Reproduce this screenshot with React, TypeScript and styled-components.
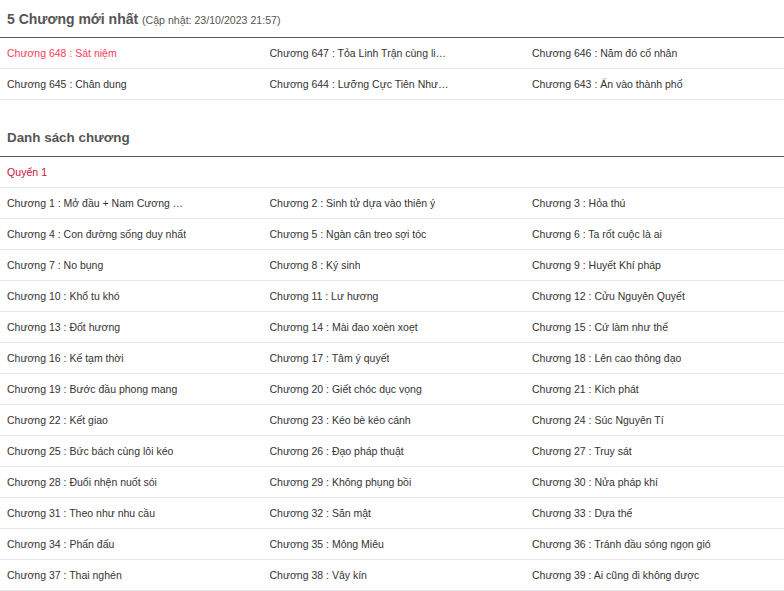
import styled, { createGlobalStyle } from 'styled-components';

const GlobalStyle = createGlobalStyle`
  html, body {
    margin: 0;
    padding: 0;
    background: #fff;
    overflow: hidden;
  }
  body {
    font-family: 'Liberation Sans', Arial, sans-serif;
    color: #333;
  }
`;

const latest = [
  {n: 648, t: 'Sát niệm', hot: true},
  {n: 647, t: 'Tỏa Linh Trận cùng linh canh'},
  {n: 646, t: 'Năm đó cố nhân'},
  {n: 645, t: 'Chân dung'},
  {n: 644, t: 'Lưỡng Cực Tiên Như Ý Đỉnh'},
  {n: 643, t: 'Ẩn vào thành phố'},
];

const chapters = [
  'Mở đầu + Nam Cương Thập Vạn Đại Sơn',
  'Sinh tử dựa vào thiên ý',
  'Hỏa thú',
  'Con đường sống duy nhất',
  'Ngàn cân treo sợi tóc',
  'Ta rốt cuộc là ai',
  'No bụng',
  'Ký sinh',
  'Huyết Khí pháp',
  'Khổ tu khó',
  'Lư hương',
  'Cửu Nguyên Quyết',
  'Đốt hương',
  'Mài đao xoèn xoẹt',
  'Cứ làm như thế',
  'Kế tạm thời',
  'Tâm ý quyết',
  'Lên cao thông đạo',
  'Bước đầu phong mang',
  'Giết chóc dục vọng',
  'Kích phát',
  'Kết giao',
  'Kéo bè kéo cánh',
  'Súc Nguyên Tí',
  'Bức bách cùng lôi kéo',
  'Đạo pháp thuật',
  'Truy sát',
  'Đuổi nhện nuốt sói',
  'Không phụng bồi',
  'Nửa pháp khí',
  'Theo như nhu cầu',
  'Săn mật',
  'Dựa thế',
  'Phấn đấu',
  'Mông Miêu',
  'Tránh đầu sóng ngọn gió',
  'Thai nghén',
  'Vây kín',
  'Ai cũng đi không được',
];

const Page = styled.div`
  width: 788px;
`;

const Section = styled.section<{ $gap?: number }>`
  margin-top: ${(p) => p.$gap ?? 0}px;
`;

const Heading = styled.h2<{ $size: number }>`
  margin: 0;
  height: 38px;
  box-sizing: border-box;
  padding: 11px 0 0 7px;
  border-bottom: 1px solid #5a5a5a;
  font-size: ${(p) => p.$size}px;
  font-weight: bold;
  color: #555;
  white-space: nowrap;
  line-height: 16px;
`;

const Updated = styled.small`
  font-size: 10.6px;
  font-weight: normal;
  color: #555;
`;

const Grid = styled.ul`
  list-style: none;
  margin: 0;
  padding: 0;
  display: grid;
  grid-template-columns: repeat(3, 262.5px);
`;

const Cell = styled.li`
  height: 31px;
  box-sizing: border-box;
  border-bottom: 1px solid #e6e6e6;
  padding-left: 7px;
  display: flex;
  align-items: center;
`;

const VolumeRow = styled.div`
  height: 31px;
  box-sizing: border-box;
  border-bottom: 1px solid #e6e6e6;
  padding-left: 7px;
  display: flex;
  align-items: center;
  font-size: 10.6px;
  color: #d0103a;
`;

const ChapterLink = styled.a<{ $hot?: boolean }>`
  display: block;
  max-width: 181px;
  overflow: hidden;
  white-space: nowrap;
  text-overflow: ellipsis;
  font-size: 10.5px;
  color: ${(p) => (p.$hot ? '#ff3b5c' : '#333')};
  text-decoration: none;
  cursor: pointer;
`;

export default function App() {
  return (
    <Page>
      <GlobalStyle />
      <Section>
        <Heading $size={14}>
          5 Chương mới nhất <Updated>(Cập nhật: 23/10/2023 21:57)</Updated>
        </Heading>
        <Grid>
          {latest.map((c) => (
            <Cell key={c.n}>
              <ChapterLink $hot={c.hot} title={c.t}>
                Chương {c.n} : {c.t}
              </ChapterLink>
            </Cell>
          ))}
        </Grid>
      </Section>
      <Section $gap={19}>
        <Heading $size={13.4}>Danh sách chương</Heading>
        <VolumeRow>Quyển 1</VolumeRow>
        <Grid>
          {chapters.map((t, i) => (
            <Cell key={i}>
              <ChapterLink title={t}>
                Chương {i + 1} : {t}
              </ChapterLink>
            </Cell>
          ))}
        </Grid>
      </Section>
    </Page>
  );
}
